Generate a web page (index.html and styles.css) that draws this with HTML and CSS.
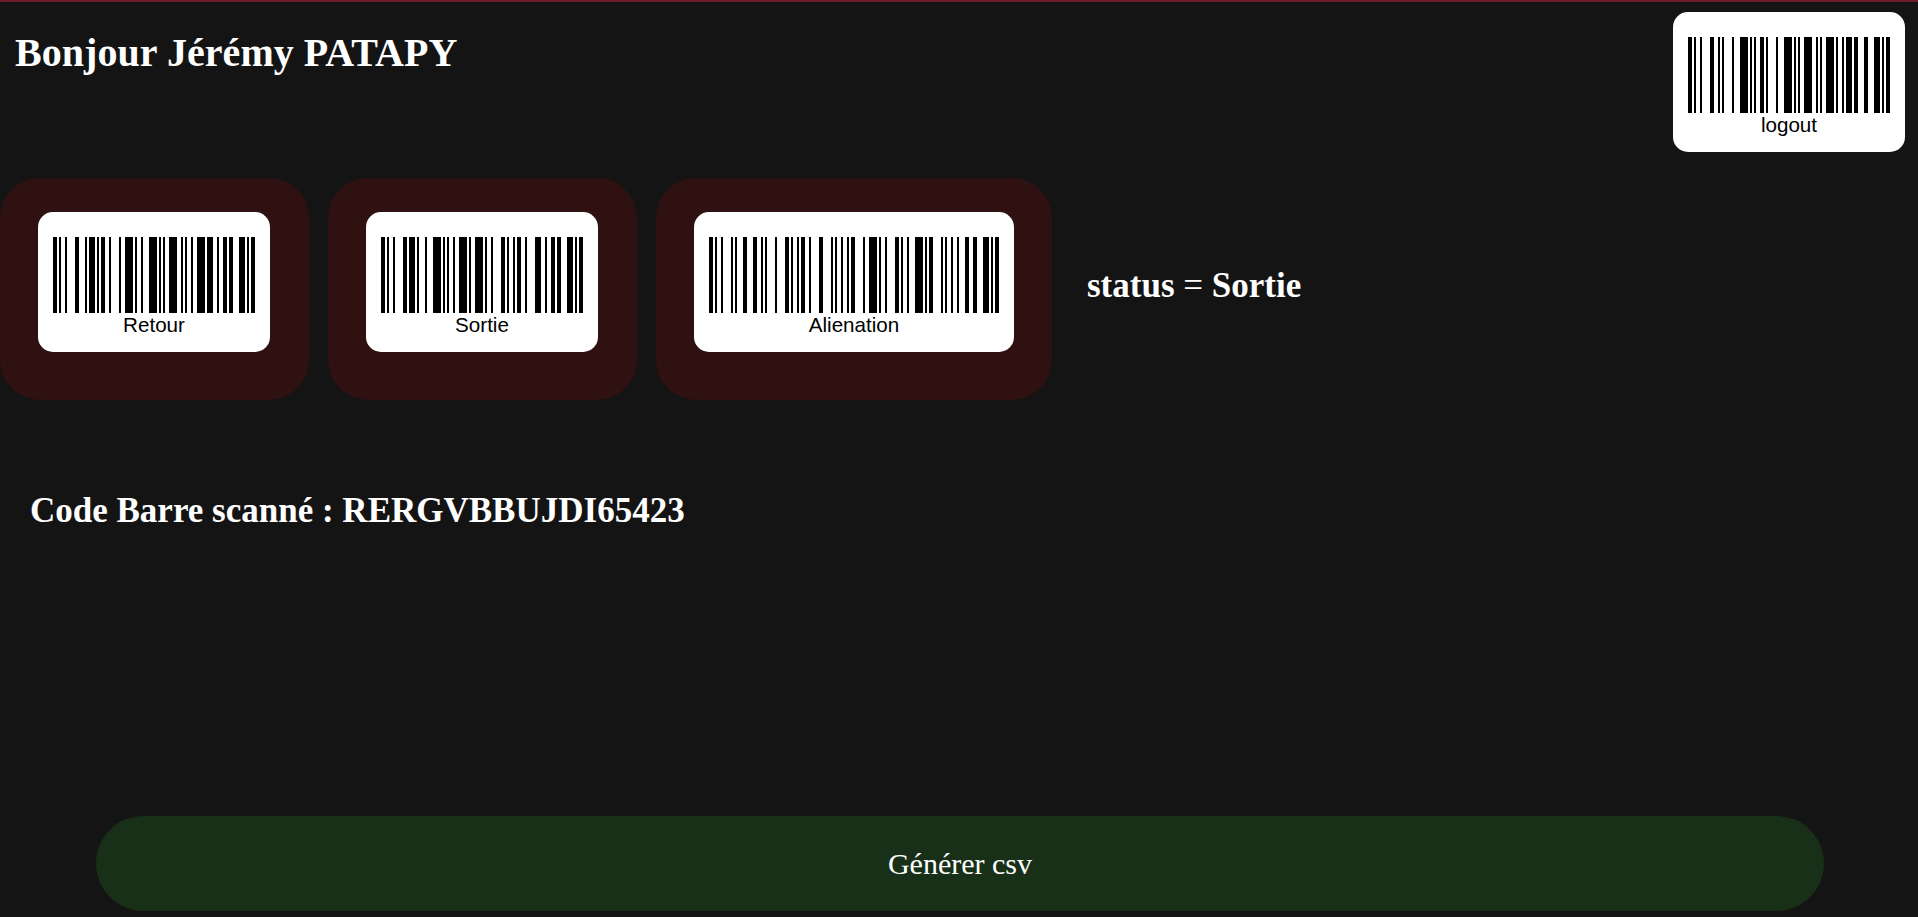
FILE: index.html
```html
<!DOCTYPE html>
<html lang="fr">
<head>
<meta charset="utf-8">
<title>Codes barres</title>
<link rel="stylesheet" href="styles.css">
</head>
<body>
<header class="header">
  <h1 class="greeting">Bonjour Jérémy PATAPY</h1>
  <div class="barcode">
    <svg class="bars" viewBox="0 0 101 76" preserveAspectRatio="none"><path d="M0 38H101" stroke-dasharray="2 1 1 2 1 4 2 2 1 1 1 4 1 3 4 1 1 1 1 2 2 1 1 4 1 3 4 1 1 1 1 2 4 2 1 1 1 2 4 1 1 2 1 1 3 1 2 3 2 3 3 1 1 1 2"/></svg>
    <span class="label">logout</span>
  </div>
</header>
<section class="actions">
  <div class="action">
    <div class="barcode">
      <svg class="bars" viewBox="0 0 101 76" preserveAspectRatio="none"><path d="M0 38H101" stroke-dasharray="2 1 1 2 1 4 2 3 1 1 3 1 1 1 2 2 1 4 1 2 4 1 1 2 1 3 4 1 1 1 1 2 4 2 1 1 1 2 1 2 4 1 3 2 1 2 2 1 2 3 3 1 1 1 2"/></svg>
      <span class="label">Retour</span>
    </div>
  </div>
  <div class="action">
    <div class="barcode">
      <svg class="bars" viewBox="0 0 101 76" preserveAspectRatio="none"><path d="M0 38H101" stroke-dasharray="2 1 1 2 1 4 2 1 3 1 1 3 1 3 4 1 1 1 1 2 1 2 4 1 1 2 4 1 1 2 1 4 2 1 1 2 1 1 2 2 1 4 3 2 1 2 2 1 2 3 3 1 1 1 2"/></svg>
      <span class="label">Sortie</span>
    </div>
  </div>
  <div class="action action-wide">
    <div class="barcode">
      <svg class="bars bars-wide" viewBox="0 0 145 76" preserveAspectRatio="none"><path d="M0 38H145" stroke-dasharray="2 1 1 2 1 4 1 1 1 3 2 3 2 2 1 1 1 4 1 4 2 1 1 2 1 1 2 2 1 4 2 4 1 1 1 2 1 2 1 1 2 4 1 2 4 1 1 2 1 4 2 1 1 2 1 3 4 1 1 1 2 4 1 1 1 2 1 2 1 3 2 2 2 3 3 1 1 1 2"/></svg>
      <span class="label">Alienation</span>
    </div>
  </div>
  <h2 class="status">status <span class="equals">=</span> Sortie</h2>
</section>
<h2 class="scanned">Code Barre scanné : RERGVBBUJDI65423</h2>
<button class="export">Générer csv</button>
</body>
</html>
```
FILE: styles.css
```css
* {
  box-sizing: border-box;
}

body {
  margin: 0;
  height: 917px;
  display: flex;
  flex-direction: column;
  border-top: 2px solid #6b1c26;
  background: #141414;
  color: #fff;
  font-family: "Liberation Serif", "Times New Roman", serif;
  overflow: hidden;
}

h1,
h2 {
  margin: 0;
  white-space: nowrap;
}

.header {
  display: flex;
  justify-content: space-between;
  align-items: flex-start;
  height: 176px;
  padding: 10px 13px 0 15px;
}

.greeting {
  margin-top: 18px;
  font-size: 40px;
  line-height: 46px;
  letter-spacing: 0.05px;
}

.barcode {
  display: flex;
  flex-direction: column;
  align-items: center;
  height: 140px;
  padding: 25px 15px 0;
  border-radius: 15px;
  background: #fff;
  color: #000;
}

.bars {
  display: block;
  width: 202px;
  height: 76px;
  shape-rendering: crispEdges;
}

.bars-wide {
  width: 290px;
}

.bars path {
  fill: none;
  stroke: #000;
  stroke-width: 76;
}

.label {
  font: 20.6px/23px "Liberation Sans", Arial, sans-serif;
}

.actions {
  display: flex;
  gap: 19px;
  height: 222px;
}

.action {
  padding: 34px 39px 0 38px;
  border-radius: 40px;
  background: #2f1112;
}

.action-wide {
  padding-right: 38px;
}

.status {
  margin: 88px 0 0 16px;
  font-size: 35px;
  line-height: 40px;
}

.equals {
  font-weight: 400;
}

.scanned {
  margin: 91px 0 0 30px;
  font-size: 35px;
  line-height: 40px;
}

.export {
  width: 1728px;
  height: 95px;
  margin: auto 0 6px 96px;
  border: 0;
  border-radius: 50px;
  background: #183018;
  color: #fff;
  font: 30px "Liberation Serif", "Times New Roman", serif;
}
```
